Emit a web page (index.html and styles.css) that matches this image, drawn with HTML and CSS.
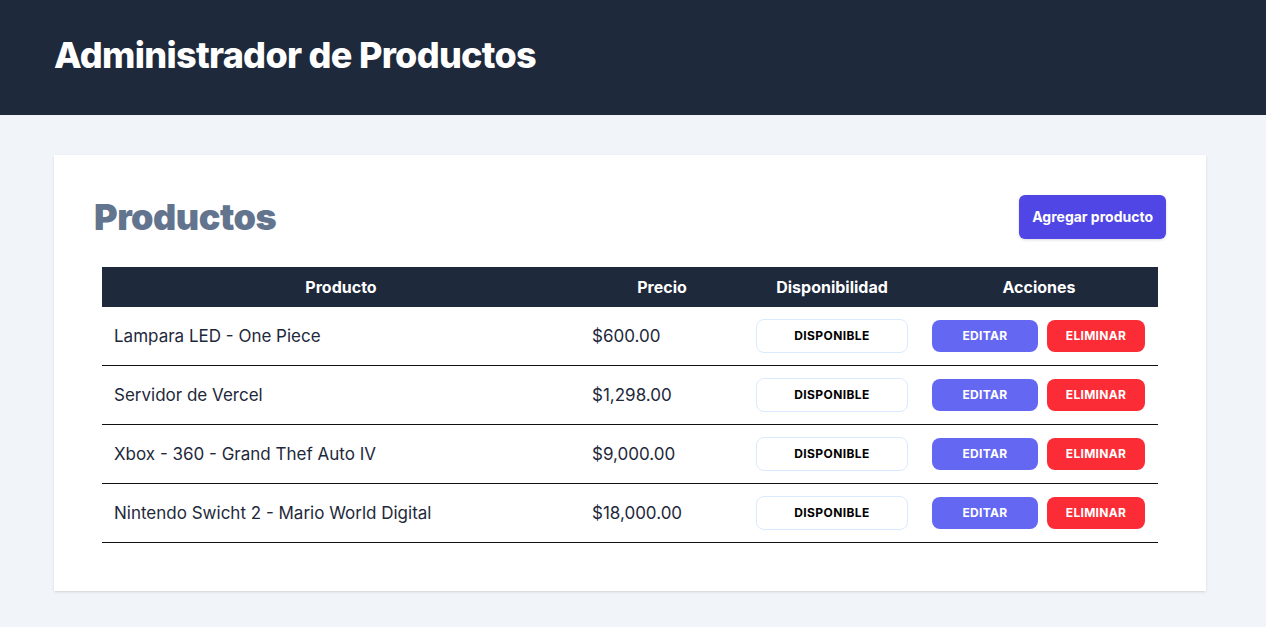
FILE: index.html
```html
<!DOCTYPE html>
<html lang="es">
<head>
<meta charset="utf-8">
<title>Administrador de Productos</title>
<link rel="stylesheet" href="styles.css">
</head>
<body>
<header class="site-header">
  <h1 class="site-title">Administrador de Productos</h1>
</header>
<main class="card">
  <div class="card-top">
    <h2 class="card-title">Productos</h2>
    <a class="btn-add" href="#">Agregar producto</a>
  </div>
  <div class="table-wrap">
    <table class="table">
      <thead>
        <tr>
          <th class="col-name">Producto</th>
          <th class="col-price">Precio</th>
          <th class="col-avail">Disponibilidad</th>
          <th class="col-actions">Acciones</th>
        </tr>
      </thead>
      <tbody>
        <tr>
          <td>Lampara LED - One Piece</td>
          <td>$600.00</td>
          <td><span class="badge">Disponible</span></td>
          <td><div class="actions"><a class="btn-edit" href="#">Editar</a><button class="btn-del">Eliminar</button></div></td>
        </tr>
        <tr>
          <td>Servidor de Vercel</td>
          <td>$1,298.00</td>
          <td><span class="badge">Disponible</span></td>
          <td><div class="actions"><a class="btn-edit" href="#">Editar</a><button class="btn-del">Eliminar</button></div></td>
        </tr>
        <tr>
          <td>Xbox - 360 - Grand Thef Auto IV</td>
          <td>$9,000.00</td>
          <td><span class="badge">Disponible</span></td>
          <td><div class="actions"><a class="btn-edit" href="#">Editar</a><button class="btn-del">Eliminar</button></div></td>
        </tr>
        <tr>
          <td>Nintendo Swicht 2 - Mario World Digital</td>
          <td>$18,000.00</td>
          <td><span class="badge">Disponible</span></td>
          <td><div class="actions"><a class="btn-edit" href="#">Editar</a><button class="btn-del">Eliminar</button></div></td>
        </tr>
      </tbody>
    </table>
  </div>
</main>
</body>
</html>
```
FILE: styles.css
```css
* { box-sizing: border-box; }
html, body { margin: 0; padding: 0; }
body {
  background: #f1f5f9;
  font-family: Inter, "Liberation Sans", sans-serif;
  color: #1e293b;
  min-height: 627px;
}
.site-header {
  background: #1e293b;
  padding: 35px 54px 40px;
}
.site-title {
  margin: 0;
  color: #fff;
  font-size: 36px;
  line-height: 40px;
  font-weight: 800;
  letter-spacing: -0.7px;
}
.card {
  display: block;
  width: 1152px;
  margin: 40px 0 0 54px;
  background: #fff;
  padding: 40px;
  box-shadow: 0 1px 3px rgba(0,0,0,0.1), 0 1px 2px -1px rgba(0,0,0,0.1);
}
.card-top {
  display: flex;
  justify-content: space-between;
  align-items: center;
}
.card-title {
  margin: 0;
  font-size: 36px;
  line-height: 40px;
  font-weight: 900;
  color: #62748e;
  letter-spacing: -0.5px;
}
.btn-add {
  display: inline-block;
  background: #4f46e5;
  color: #fff;
  text-decoration: none;
  font-size: 14px;
  line-height: 20px;
  font-weight: 700;
  padding: 12px 13px;
  border-radius: 6px;
  box-shadow: 0 1px 3px rgba(0,0,0,0.15);
}
.table-wrap {
  margin-top: 20px;
  padding: 8px;
}
.table {
  width: 100%;
  border-collapse: collapse;
  table-layout: fixed;
}
.table th {
  background: #1e293b;
  color: #fff;
  font-size: 16px;
  line-height: 24px;
  font-weight: 700;
  padding: 8px;
  text-align: center;
}
.col-name { width: 478px; }
.col-price { width: 164px; }
.col-avail { width: 176px; }
.col-actions { width: 238px; }
.table td {
  padding: 12px;
  font-size: 17px;
  line-height: 24px;
  color: #1e293b;
  border-bottom: 1px solid #111;
  vertical-align: middle;
}
.badge {
  display: block;
  border: 1px solid #dbeafe;
  border-radius: 8px;
  padding: 8px;
  font-size: 12px;
  line-height: 16px;
  font-weight: 700;
  letter-spacing: 0.4px;
  text-transform: uppercase;
  text-align: center;
  color: #000;
  background: #fff;
}
.actions {
  display: flex;
  gap: 9px;
  align-items: center;
}
.btn-edit, .btn-del {
  display: block;
  border: 0;
  border-radius: 8px;
  padding: 8px 0;
  font-family: inherit;
  font-size: 12px;
  line-height: 16px;
  font-weight: 700;
  letter-spacing: 0.3px;
  text-transform: uppercase;
  text-align: center;
  color: #fff;
  text-decoration: none;
}
.btn-edit { background: #6467f2; width: 106px; }
.btn-del { background: #fb2c36; width: 98px; }
```
